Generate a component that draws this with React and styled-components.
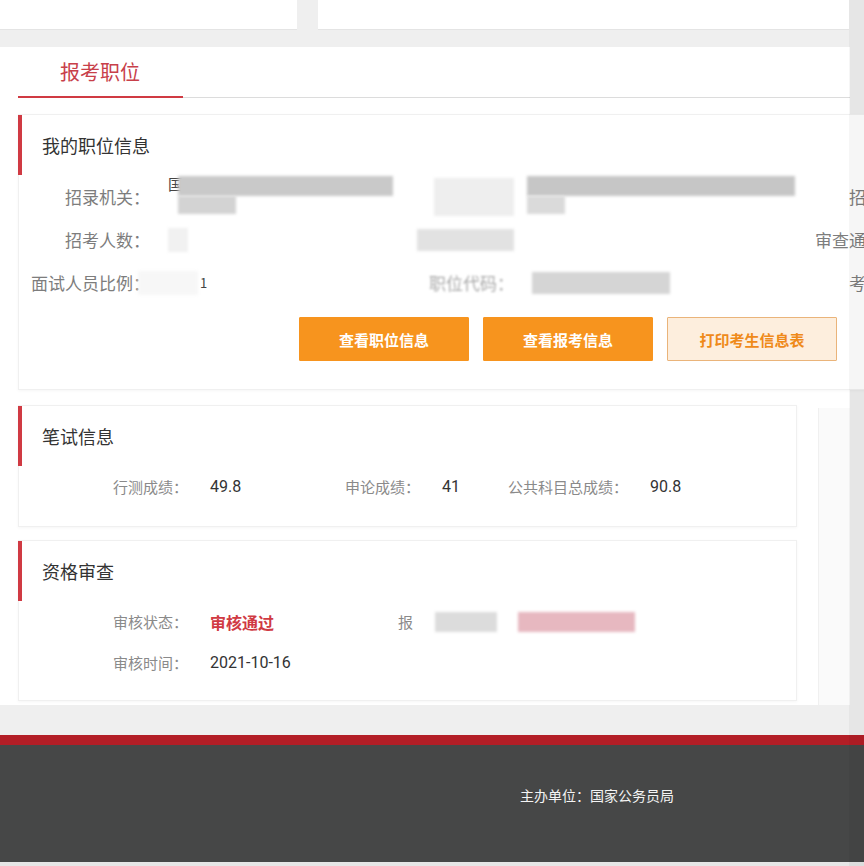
import React from 'react';
import styled, { createGlobalStyle } from 'styled-components';

const GlobalStyle = createGlobalStyle`
  html, body {
    margin: 0;
    padding: 0;
    background: #efefef;
    overflow: hidden;
  }
  body {
    font-family: "Noto Sans CJK SC", "Noto Sans", "Liberation Sans", sans-serif;
    width: 864px;
  }
`;

const red = '#d03a43';

function App() {
  return (
    <Page>
      <GlobalStyle />
      <TopBar>
        <TopPanel width="297px" />
        <TopPanel width="531px" />
      </TopBar>

      <Main>
        <Tabs>
          <Tab>报考职位</Tab>
        </Tabs>

        <Card wide bottom={28}>
          <CardTitle>我的职位信息</CardTitle>
          <InfoGrid>
            <Label>招录机关：</Label>
            <Value>
              <Glyph>国</Glyph>
              <Stack>
                <Mosaic w={215} h={20} tone="#c9c9c9" />
                <Mosaic w={58} h={18} tone="#d3d3d3" />
              </Stack>
            </Value>
            <Label>
              <Mosaic w={80} h={38} tone="#eeeeee" />
            </Label>
            <Value>
              <Stack>
                <Mosaic w={268} h={20} tone="#c6c6c6" />
                <Mosaic w={38} h={18} tone="#dadada" />
              </Stack>
            </Value>
            <Label>招考类别：</Label>

            <Label>招考人数：</Label>
            <Value>
              <Mosaic w={20} h={24} tone="#f1f1f1" />
            </Value>
            <Label>
              <Mosaic w={97} h={22} tone="#e2e2e2" />
            </Label>
            <Value />
            <Label>审查通过人数：</Label>

            <Label>面试人员比例：</Label>
            <Value>
              <Mosaic w={60} h={24} tone="rgba(246,246,246,0.92)" shift={-30} />
              <Thin>1</Thin>
            </Value>
            <Label>
              <Faded>职位代码：</Faded>
            </Label>
            <Value>
              <Mosaic w={138} h={22} tone="#d5d5d5" />
            </Value>
            <Label>考试类别：</Label>
          </InfoGrid>

          <Actions>
            <ActionButton>查看职位信息</ActionButton>
            <ActionButton>查看报考信息</ActionButton>
            <ActionButton ghost>打印考生信息表</ActionButton>
          </Actions>
        </Card>

        <Lower>
          <Column>
            <Card>
              <CardTitle>笔试信息</CardTitle>
              <ScoreRow>
                <Field valueWidth={135}>
                  <FieldLabel>行测成绩：</FieldLabel>
                  <FieldValue>49.8</FieldValue>
                </Field>
                <Field valueWidth={66}>
                  <FieldLabel>申论成绩：</FieldLabel>
                  <FieldValue>41</FieldValue>
                </Field>
                <Field valueWidth={60}>
                  <FieldLabel>公共科目总成绩：</FieldLabel>
                  <FieldValue>90.8</FieldValue>
                </Field>
              </ScoreRow>
            </Card>

            <Card bottom={17}>
              <CardTitle>资格审查</CardTitle>
              <ScoreRow>
                <Field valueWidth={188}>
                  <FieldLabel>审核状态：</FieldLabel>
                  <FieldValue status>审核通过</FieldValue>
                </Field>
                <Field>
                  <FieldLabel>报</FieldLabel>
                  <Mosaic w={62} h={20} tone="#dcdcdc" />
                  <Spacer />
                  <Mosaic w={117} h={20} tone="#e7b8c0" />
                </Field>
              </ScoreRow>
              <ScoreRow>
                <Field>
                  <FieldLabel>审核时间：</FieldLabel>
                  <FieldValue>2021-10-16</FieldValue>
                </Field>
              </ScoreRow>
            </Card>
          </Column>
          <Aside />
        </Lower>
      </Main>

      <Footer>
        <RedBand />
        <FooterBody>
          <FooterText>主办单位：国家公务员局</FooterText>
        </FooterBody>
        <FooterEdge />
      </Footer>
      <ScrollTrack />
    </Page>
  );
}

export default App;

const Page = styled.div`
  width: 864px;
  height: 866px;
  display: flex;
  flex-direction: column;
  overflow: hidden;
`;

const TopBar = styled.div`
  display: flex;
  gap: 21px;
  height: 30px;
  margin-bottom: 17px;
  flex-shrink: 0;
`;

const TopPanel = styled.div`
  width: ${p => p.width};
  background: #fff;
  border-bottom: 1px solid #e4e4e4;
`;

const Main = styled.div`
  width: 850px;
  background: #fff;
  padding: 0 0 4px 18px;
  box-sizing: border-box;
  flex-shrink: 0;
`;

const Tabs = styled.div`
  display: flex;
  border-bottom: 1px solid #dcdcdc;
  margin-bottom: 16px;
`;

const Tab = styled.div`
  width: 165px;
  height: 51px;
  box-sizing: border-box;
  border-bottom: 2px solid ${red};
  margin-bottom: -1px;
  padding-left: 42px;
  display: flex;
  align-items: center;
  font-size: 20px;
  color: #c8404a;
`;

const Card = styled.div`
  width: ${p => (p.wide ? '1000px' : '779px')};
  box-sizing: border-box;
  border: 1px solid #f0f0f0;
  box-shadow: 0 1px 3px rgba(0, 0, 0, 0.04);
  padding-bottom: ${p => (p.bottom !== undefined ? p.bottom : 19)}px;
  background: #fff;
`;

const CardTitle = styled.div`
  height: 60px;
  display: flex;
  align-items: center;
  padding-left: 20px;
  font-size: 18px;
  color: #333;
  border-left: 4px solid ${red};
  margin-left: -1px;
`;

const InfoGrid = styled.div`
  display: grid;
  grid-template-columns: 150px 247px 117px 268px 152px;
  grid-auto-rows: 43px;
  margin-left: -1px;
`;

const Label = styled.div`
  display: flex;
  align-items: center;
  justify-content: flex-end;
  padding-right: 18px;
  font-size: 17px;
  color: #7d7d7d;
  white-space: nowrap;
`;

const Value = styled.div`
  display: flex;
  align-items: center;
  font-size: 16px;
  color: #333;
`;

const Glyph = styled.span`
  align-self: flex-start;
  margin-top: -1px;
  font-size: 15px;
  line-height: 20px;
  color: #444;
`;

const Thin = styled.span`
  margin-left: 2px;
  font-size: 13px;
  color: #444;
`;

const Faded = styled.span`
  color: #aaa;
  filter: blur(1.2px);
`;

const Stack = styled.div`
  display: flex;
  flex-direction: column;
  align-self: flex-start;
  margin: 1px 0 0 -5px;
`;

const Mosaic = styled.span`
  display: block;
  width: ${p => p.w}px;
  height: ${p => p.h}px;
  margin-left: ${p => p.shift || 0}px;
  background: ${p => p.tone};
  filter: blur(1.5px);
  flex-shrink: 0;
`;

const Actions = styled.div`
  display: flex;
  gap: 14px;
  padding: 13px 0 0 280px;
`;

const ActionButton = styled.button`
  width: 170px;
  height: 44px;
  border: 1px solid ${p => (p.ghost ? '#eab47a' : '#f7941e')};
  background: ${p => (p.ghost ? '#fdeedd' : '#f7941e')};
  color: ${p => (p.ghost ? '#ef8a1a' : '#fff')};
  font-family: inherit;
  font-size: 15px;
  font-weight: 700;
  border-radius: 1px;
  cursor: pointer;
`;

const Lower = styled.div`
  display: flex;
  gap: 21px;
  margin-top: 15px;
`;

const Column = styled.div`
  display: flex;
  flex-direction: column;
  gap: 13px;
`;

const Aside = styled.div`
  flex: 1;
  margin-top: 3px;
  margin-bottom: -4px;
  background: #fafafa;
  border-left: 1px solid #f0f0f0;
`;

const ScoreRow = styled.div`
  display: flex;
  align-items: center;
  height: 41px;
  padding-left: 94px;
`;

const Field = styled.div`
  display: flex;
  align-items: center;
  font-size: 15px;
  & > :last-child {
    ${p => (p.valueWidth ? `width: ${p.valueWidth}px;` : '')}
  }
`;

const FieldLabel = styled.span`
  color: #8a8a8a;
  margin-right: 22px;
  white-space: nowrap;
`;

const FieldValue = styled.span`
  color: ${p => (p.status ? red : '#333')};
  font-weight: ${p => (p.status ? 700 : 400)};
  font-family: ${p => (p.status ? 'inherit' : '"Roboto", "Noto Sans CJK SC", sans-serif')};
  font-size: 16px;
`;

const Spacer = styled.span`
  width: 21px;
`;

const Footer = styled.footer`
  margin-top: 30px;
  display: flex;
  flex-direction: column;
  flex: 1;
`;

const RedBand = styled.div`
  height: 10px;
  background: #b31e26;
`;

const FooterBody = styled.div`
  flex: 1;
  background: #464747;
  padding: 41px 0 0 520px;
`;

const FooterText = styled.div`
  color: #f4f4f4;
  font-size: 14px;
  line-height: 18px;
`;

const FooterEdge = styled.div`
  height: 4px;
  background: #e6e6e6;
`;

const ScrollTrack = styled.div`
  position: fixed;
  top: 0;
  right: 0;
  width: 15px;
  height: 100%;
  background: rgba(0, 0, 0, 0.035);
`;
